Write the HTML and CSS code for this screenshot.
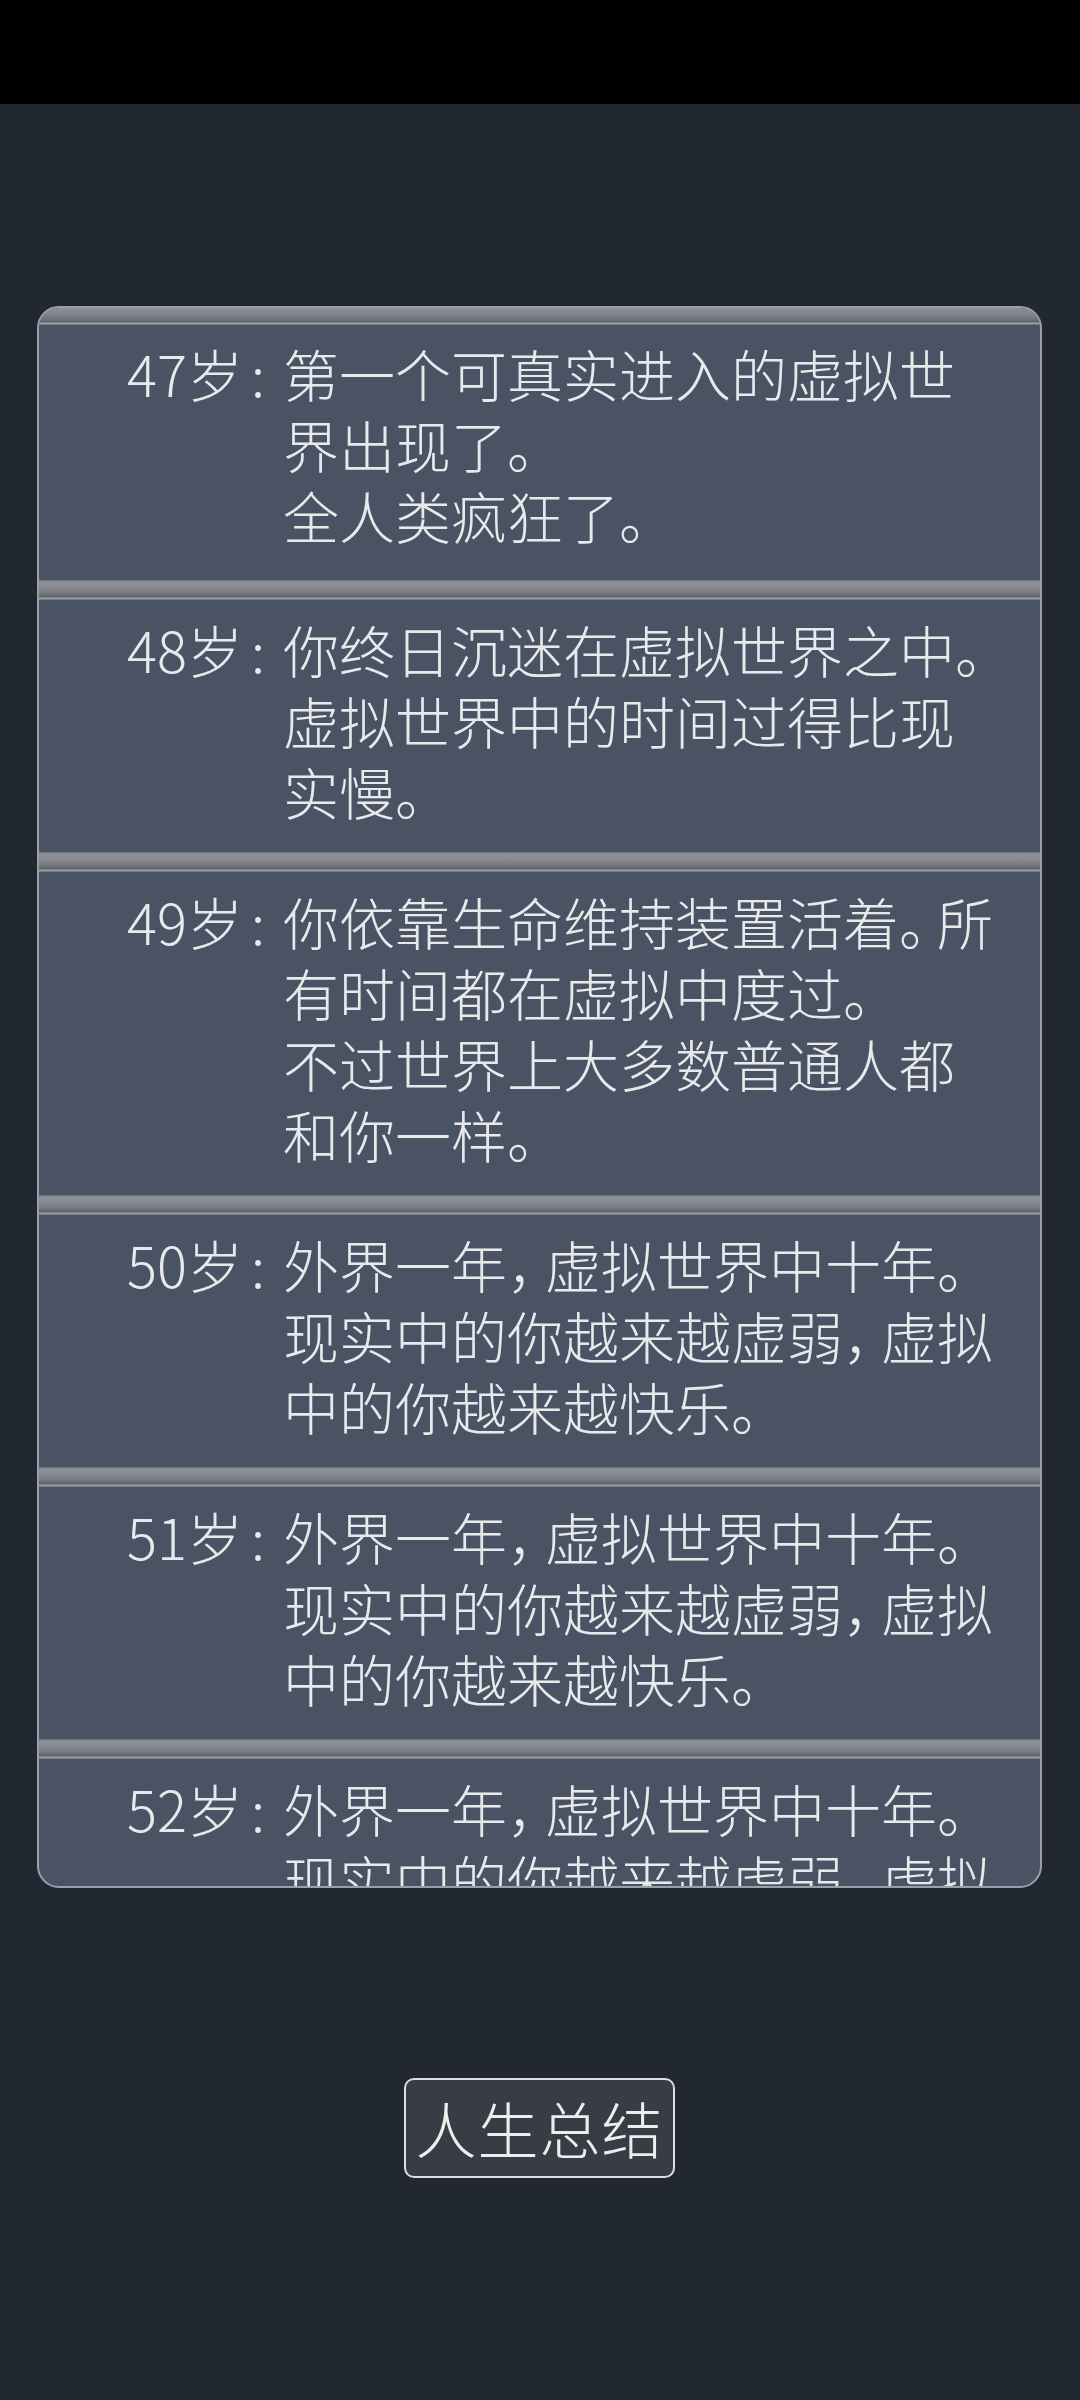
FILE: index.html
```html
<!DOCTYPE html>
<html lang="zh-CN">
<head>
<meta charset="utf-8">
<title>人生重开</title>
<link rel="stylesheet" href="styles.css">
</head>
<body>
<div class="statusbar"></div>
<main class="screen">
  <section class="log">
    <div class="entry">
      <div class="bar"></div>
      <div class="row">
        <div class="age">47岁<span class="colon">:</span></div>
        <div class="text">
          <div class="line">第一个可真实进入的虚拟世</div>
          <div class="line">界出现了。</div>
          <div class="line">全人类疯狂了。</div>
        </div>
      </div>
    </div>
    <div class="entry">
      <div class="bar"></div>
      <div class="row">
        <div class="age">48岁<span class="colon">:</span></div>
        <div class="text">
          <div class="line">你终日沉迷在虚拟世界之中。</div>
          <div class="line">虚拟世界中的时间过得比现</div>
          <div class="line">实慢。</div>
        </div>
      </div>
    </div>
    <div class="entry">
      <div class="bar"></div>
      <div class="row">
        <div class="age">49岁<span class="colon">:</span></div>
        <div class="text">
          <div class="line">你依靠生命维持装置活着<span class="p">。</span>所</div>
          <div class="line">有时间都在虚拟中度过。</div>
          <div class="line">不过世界上大多数普通人都</div>
          <div class="line">和你一样。</div>
        </div>
      </div>
    </div>
    <div class="entry">
      <div class="bar"></div>
      <div class="row">
        <div class="age">50岁<span class="colon">:</span></div>
        <div class="text">
          <div class="line">外界一年<span class="p">，</span>虚拟世界中十年。</div>
          <div class="line">现实中的你越来越虚弱<span class="p">，</span>虚拟</div>
          <div class="line">中的你越来越快乐。</div>
        </div>
      </div>
    </div>
    <div class="entry">
      <div class="bar"></div>
      <div class="row">
        <div class="age">51岁<span class="colon">:</span></div>
        <div class="text">
          <div class="line">外界一年<span class="p">，</span>虚拟世界中十年。</div>
          <div class="line">现实中的你越来越虚弱<span class="p">，</span>虚拟</div>
          <div class="line">中的你越来越快乐。</div>
        </div>
      </div>
    </div>
    <div class="entry">
      <div class="bar"></div>
      <div class="row">
        <div class="age">52岁<span class="colon">:</span></div>
        <div class="text">
          <div class="line">外界一年<span class="p">，</span>虚拟世界中十年。</div>
          <div class="line">现实中的你越来越虚弱<span class="p">，</span>虚拟</div>
          <div class="line">中的你越来越快乐。</div>
        </div>
      </div>
    </div>
  </section>
  <div class="actions">
    <button class="summary">人生总结</button>
  </div>
</main>
</body>
</html>
```
FILE: styles.css
```css
* { box-sizing: border-box; }
html, body {
  margin: 0;
  padding: 0;
  background: #222831;
  width: 1080px;
  height: 2400px;
  overflow: hidden;
  font-family: "Noto Sans CJK SC", "Noto Sans", sans-serif;
  color: #e8e9eb;
}
.statusbar {
  height: 104px;
  background: #000;
}
.screen {
  padding: 202px 38px 0 37px;
}
.log {
  height: 1582px;
  overflow: hidden;
  background: #4a5363;
  border: 2px solid #9ba0a8;
  border-radius: 22px;
}
.bar {
  height: 20px;
  background: linear-gradient(to bottom,
    #666b73 0px, #8f949a 2px, #868a90 8px, #72767c 14px, #5c6067 17px,
    #9ea2a8 18px, #9ea2a8 19px, #4a5363 20px);
}
.entry:first-child .bar {
  height: 17px;
  background: linear-gradient(to bottom,
    #8c9197 0px, #80858b 6px, #6d7177 12px, #5c6067 14px,
    #9ea2a8 15px, #9ea2a8 16px, #4a5363 17px);
}
.row {
  display: grid;
  grid-template-columns: 244px 1fr;
  padding: 13px 0 26px 0;
  font-size: 56px;
  line-height: 71px;
  font-weight: 300;
}
.entry:first-child .row {
  padding-top: 12px;
  padding-bottom: 30px;
}
.age {
  text-align: right;
  white-space: nowrap;
}
.colon {
  display: inline-block;
  width: 40px;
  padding-left: 8px;
  text-align: left;
}
.text {
  white-space: nowrap;
}
.p {
  font-feature-settings: "halt" 1;
  margin-right: 10px;
}
.line {
  height: 71px;
}
.actions {
  display: flex;
  justify-content: center;
  padding-top: 190px;
}
.summary {
  width: 271px;
  height: 100px;
  padding: 0;
  background: #383c45;
  border: 2px solid #dcdde0;
  border-radius: 10px;
  color: #eeeeee;
  font-family: "Noto Sans CJK SC", sans-serif;
  font-size: 61px;
  font-weight: 300;
  line-height: 94px;
  letter-spacing: 1px;
}
```
